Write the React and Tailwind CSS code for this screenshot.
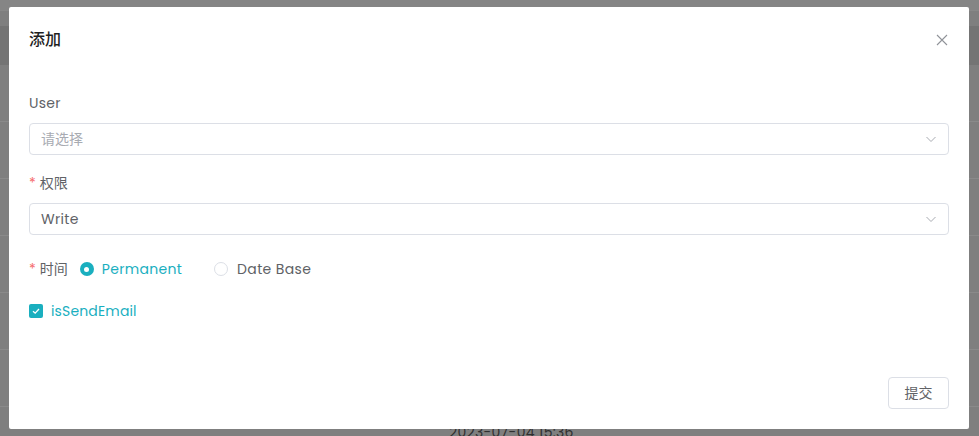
import React from "react";

const teal = "#1aafbf";

function Chevron() {
  return (
    <svg width="12" height="12" viewBox="0 0 12 12" fill="none">
      <path d="M1.5 4 L6 8.5 L10.5 4" stroke="#a8abb2" strokeWidth="1" />
    </svg>
  );
}

export default function App() {
  const font = { fontFamily: "Poppins, Inter, 'Noto Sans CJK SC', sans-serif" };
  return (
    <div className="relative h-[436px] w-[979px] overflow-hidden bg-[#7f7f7f]" style={font}>
      {/* background page (dimmed) */}
      <div className="flex flex-col">
        <div className="h-[10px] bg-[#858585]" />
        <div className="h-[16px] border-t border-[#888] bg-[#7f7f7f]" />
        <div className="h-[39px] bg-[#747474]" />
        <div className="h-[57px] border-b border-[#8a8a8a]" />
        <div className="h-[57px] border-b border-[#8a8a8a]" />
        <div className="h-[57px] border-b border-[#8a8a8a]" />
        <div className="h-[57px] border-b border-[#8a8a8a]" />
        <div className="h-[57px] border-b border-[#8a8a8a]" />
        <div className="h-[57px] border-b border-[#8a8a8a]" />
        <div className="flex h-[40px] justify-center pl-[44px] pt-[15px] text-[14px] leading-[20px] tracking-[0.3px] text-[#2f2f2f]">2023-07-04 15:36</div>
      </div>

      {/* modal */}
      <div className="absolute left-[9px] top-[7px] flex h-[422px] w-[960px] flex-col rounded-[2px] bg-white px-[20px]">
        <div className="flex h-[66px] items-center justify-between">
          <span className="text-[16px] font-medium text-[#1f1f1f]">添加</span>
          <svg width="12" height="12" viewBox="0 0 12 12" className="mr-[1px]">
            <path d="M1 1 L11 11 M11 1 L1 11" stroke="#909399" strokeWidth="1.1" />
          </svg>
        </div>

        <div className="mt-[18px] text-[14px] leading-[24px] tracking-[0.3px] text-[#606266]">User</div>
        <div className="mt-[8px] flex h-[32px] items-center justify-between rounded-[4px] border border-[#dcdfe6] pl-[11px] pr-[11px]">
          <span className="text-[14px] text-[#a8abb2]">请选择</span>
          <Chevron />
        </div>

        <div className="mt-[16px] flex items-center text-[14px] leading-[24px] text-[#606266]">
          <span className="mr-[4px] text-[#f56c6c]">*</span>权限
        </div>
        <div className="mt-[8px] flex h-[32px] items-center justify-between rounded-[4px] border border-[#dcdfe6] pl-[11px] pr-[11px]">
          <span className="text-[14px] tracking-[0.3px] text-[#606266]">Write</span>
          <Chevron />
        </div>

        <div className="mt-[22px] flex h-[24px] items-center text-[14px] text-[#606266]">
          <span className="mr-[4px] text-[#f56c6c]">*</span>
          <span>时间</span>
          <div className="ml-[12px] flex items-center">
            <span className="flex h-[14px] w-[14px] items-center justify-center rounded-full bg-[#1aafbf]">
              <span className="h-[5px] w-[5px] rounded-full bg-white" />
            </span>
            <span className="ml-[8px] tracking-[0.3px]" style={{ color: teal }}>Permanent</span>
          </div>
          <div className="ml-[32px] flex items-center">
            <span className="h-[14px] w-[14px] rounded-full border border-[#dcdfe6] bg-white" />
            <span className="ml-[9px] tracking-[0.35px]">Date Base</span>
          </div>
        </div>

        <div className="mt-[18px] flex h-[24px] items-center">
          <span className="flex h-[14px] w-[14px] items-center justify-center rounded-[2px] bg-[#1aafbf]">
            <svg width="10" height="10" viewBox="0 0 10 10">
              <path d="M2 5.2 L4.2 7.2 L8 3" stroke="white" strokeWidth="1.3" fill="none" />
            </svg>
          </span>
          <span className="ml-[8px] text-[14px] tracking-[0.15px]" style={{ color: teal }}>isSendEmail</span>
        </div>

        <div className="mt-auto mb-[20px] flex justify-end">
          <button className="h-[32px] w-[61px] rounded-[4px] border border-[#dcdfe6] bg-white text-[14px] text-[#606266]">提交</button>
        </div>
      </div>
    </div>
  );
}
